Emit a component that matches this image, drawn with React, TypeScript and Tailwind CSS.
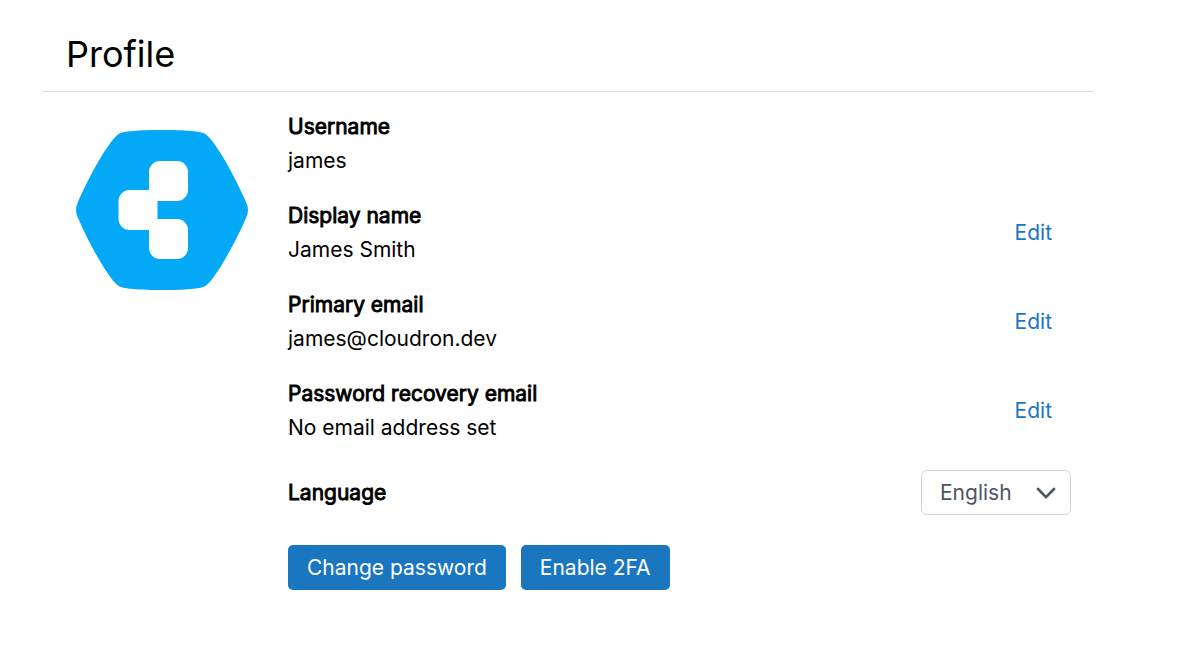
type Field = { label: string; value: string; editable: boolean };

const fields: Field[] = [
  { label: 'Username', value: 'james', editable: false },
  { label: 'Display name', value: 'James Smith', editable: true },
  { label: 'Primary email', value: 'james@cloudron.dev', editable: true },
  { label: 'Password recovery email', value: 'No email address set', editable: true },
];

const labelClass = '[-webkit-text-stroke:0.9px_black]';
const buttonClass = 'h-[45px] rounded-[5px] bg-[#1a76bf] px-[19px] text-white';

function Avatar() {
  return (
    <svg viewBox="0 0 172 160" className="h-40 w-[172px]" role="img" aria-label="Avatar">
      <path
        fill="#03a9f7"
        d="M42 4.500C46 1 64 0 86 0S126 1 130 4.500C141 13 161 51 170 72Q174 80 170 88C161 109 141 147 130 155.500C126 159 108 160 86 160S46 159 42 155.500C31 147 11 109 2 88Q-2 80 2 72C11 51 31 13 42 4.500Z"
      />
      <path
        fill="#fff"
        d="M84 31h17a11 11 0 0 1 11 11v18a11 11 0 0 1-11 11H81.500v18H101a11 11 0 0 1 11 11v18a11 11 0 0 1-11 11H84a11 11 0 0 1-11-11V100H53.500a11 11 0 0 1-11-11V71a11 11 0 0 1 11-11h19.500V42a11 11 0 0 1 11-11Z"
      />
    </svg>
  );
}

function Chevron() {
  return (
    <svg
      viewBox="0 0 20 12"
      className="pointer-events-none col-start-1 row-start-1 mr-[15px] h-3 w-5 justify-self-end text-[#4b5563]"
      fill="none"
      stroke="currentColor"
      strokeWidth="2.6"
      strokeLinecap="round"
      strokeLinejoin="round"
      aria-hidden="true"
    >
      <path d="M2 2L10 10.200L18 2" />
    </svg>
  );
}

export default function App() {
  return (
    <main className="mr-[90px] ml-[43px] bg-white pt-[26px] font-['Inter',sans-serif] text-[21px] leading-[34px] text-black">
      <header className="border-b border-[#d9dce2] px-[23px] pb-2">
        <h1 className="text-[36px] leading-[57px]">Profile</h1>
      </header>
      <div className="flex gap-10 pt-[18px] pr-[22px] pl-[33px]">
        <div className="shrink-0 pt-5">
          <Avatar />
        </div>
        <section className="min-w-0 flex-1">
          <dl className="flex flex-col gap-[21px]">
            {fields.map((field) => (
              <div key={field.label} className="flex items-center justify-between">
                <div>
                  <dt className={labelClass}>{field.label}</dt>
                  <dd>{field.value}</dd>
                </div>
                {field.editable && (
                  <dd>
                    <button type="button" className="px-[19px] text-[#1a76bf]" aria-label={`Edit ${field.label}`}>
                      Edit
                    </button>
                  </dd>
                )}
              </div>
            ))}
          </dl>
          <div className="mt-[25px] flex items-center justify-between">
            <label htmlFor="language" className={labelClass}>
              Language
            </label>
            <div className="grid w-[150px] items-center">
              <select
                id="language"
                className="col-start-1 row-start-1 h-[45px] appearance-none rounded-[6px] border border-[#d1d5db] bg-white pr-10 pl-[18px] text-[#4b5563]"
              >
                <option>English</option>
              </select>
              <Chevron />
            </div>
          </div>
          <div className="mt-[30px] flex flex-wrap gap-[15px] pb-[60px]">
            <button type="button" className={buttonClass}>
              Change password
            </button>
            <button type="button" className={buttonClass}>
              Enable 2FA
            </button>
          </div>
        </section>
      </div>
    </main>
  );
}
